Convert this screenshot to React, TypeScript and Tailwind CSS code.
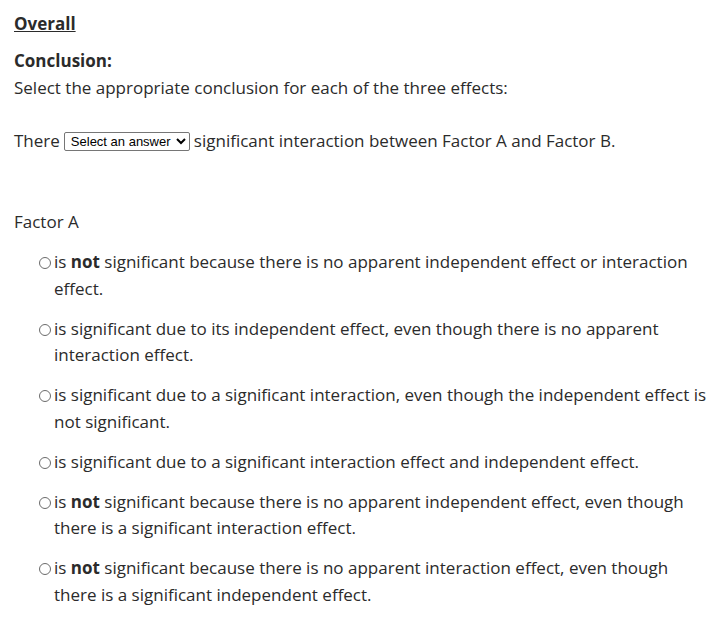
const options: { bold?: boolean; pre: string; rest: string }[] = [
  {
    bold: true,
    pre: "is ",
    rest: " significant because there is no apparent independent effect or interaction effect.",
  },
  {
    pre: "is significant due to its independent effect, even though there is no apparent interaction effect.",
    rest: "",
  },
  {
    pre: "is significant due to a significant interaction, even though the independent effect is not significant.",
    rest: "",
  },
  {
    pre: "is significant due to a significant interaction effect and independent effect.",
    rest: "",
  },
  {
    bold: true,
    pre: "is ",
    rest: " significant because there is no apparent independent effect, even though there is a significant interaction effect.",
  },
  {
    bold: true,
    pre: "is ",
    rest: " significant because there is no apparent interaction effect, even though there is a significant independent effect.",
  },
];

export default function App() {
  return (
    <div
      className="min-h-[622px] w-[726px] bg-white pl-[14px] pr-[13px] pt-[11px] text-[17px] leading-[26.8px] text-[#2b2b2b]"
      style={{ fontFamily: '"Open Sans", "Noto Sans", sans-serif' }}
    >
      <p className="font-bold underline">Overall</p>
      <p className="mt-[10px] font-bold">Conclusion:</p>
      <p>Select the appropriate conclusion for each of the three effects:</p>
      <p className="mt-[27px] flex items-center">
        There
        <select
          className="mx-[4px] h-[19px] rounded-[2px] border border-[#767676] bg-white px-[2px] text-[13px] text-black"
          style={{ fontFamily: '"Liberation Sans", Arial, sans-serif' }}
          defaultValue=""
        >
          <option value="">Select an answer</option>
          <option value="is">is</option>
          <option value="is not">is not</option>
        </select>
        significant interaction between Factor A and Factor B.
      </p>

      <p className="mt-[54px]">Factor A</p>
      <div className="mt-[13px] flex flex-col gap-[13px]">
        {options.map((o, i) => (
          <label key={i} className="block pl-[40px] indent-[-15px]">
            <span className="mr-[3px] inline-block h-[12px] w-[12px] translate-y-[1px] rounded-full border border-[#6b6b6b] indent-0" />
            {o.pre}
            {o.bold && <strong>not</strong>}
            {o.rest}
          </label>
        ))}
      </div>
    </div>
  );
}
